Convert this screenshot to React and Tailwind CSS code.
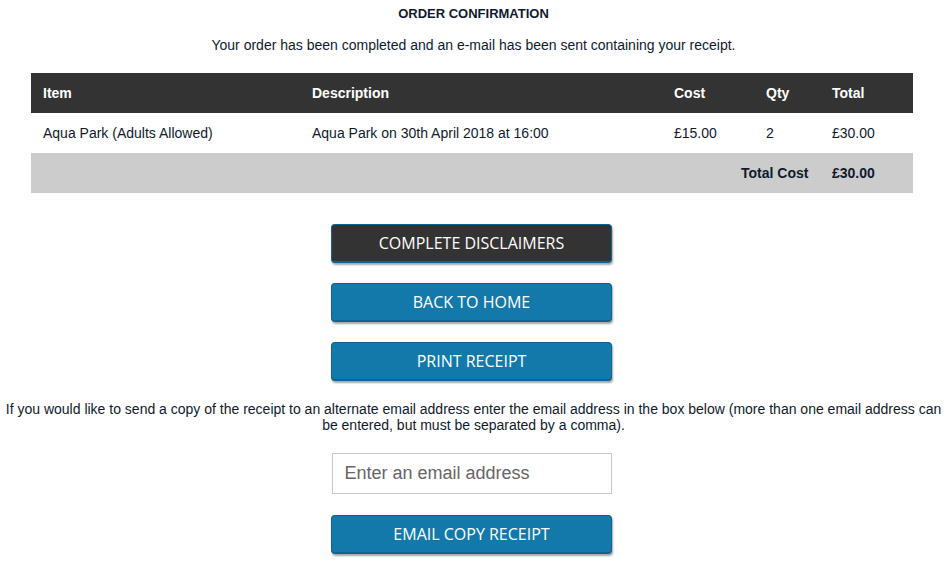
export default function App() {
  const btn =
    "w-[281px] h-[39px] rounded-[4px] border border-[#0d6391] border-b-2 text-white text-[16px] shadow-[1px_2px_2px_rgba(0,0,0,0.35)] flex items-center justify-center";
  return (
    <div className="w-[947px] h-[563px] bg-white overflow-hidden font-['Liberation_Sans',Arial,sans-serif] text-[#0f1a2e]">
      <div className="pt-[6px] text-center text-[13px] font-bold leading-[16px]">ORDER CONFIRMATION</div>
      <div className="mt-[15px] text-center text-[14px] leading-[16px]">
        Your order has been completed and an e-mail has been sent containing your receipt.
      </div>
      <div className="mx-[31px] mt-[20px] w-[882px] text-[14px]">
        <div className="grid grid-cols-[281px_362px_92px_66px_81px] h-[40px] items-center bg-[#333333] text-white font-bold">
          <div className="pl-[12px]">Item</div>
          <div>Description</div>
          <div>Cost</div>
          <div>Qty</div>
          <div>Total</div>
        </div>
        <div className="grid grid-cols-[281px_362px_92px_66px_81px] h-[40px] items-center">
          <div className="pl-[12px]">Aqua Park (Adults Allowed)</div>
          <div>Aqua Park on 30th April 2018 at 16:00</div>
          <div>£15.00</div>
          <div>2</div>
          <div>£30.00</div>
        </div>
        <div className="flex h-[40px] items-center justify-end bg-[#cccccc] font-bold">
          <div className="w-[91px]">Total Cost</div>
          <div className="w-[81px]">£30.00</div>
        </div>
      </div>
      <div className="mt-[31px] pr-[4px] flex flex-col items-center gap-[20px] font-['Open_Sans',sans-serif]">
        <div className={btn + " bg-[#333333]"}>COMPLETE DISCLAIMERS</div>
        <div className={btn + " bg-[#1379aa]"}>BACK TO HOME</div>
        <div className={btn + " bg-[#1379aa]"}>PRINT RECEIPT</div>
      </div>
      <div className="mt-[20px] text-center text-[14px] leading-[16px] px-[2px]">
        If you would like to send a copy of the receipt to an alternate email address enter the email address in the box below (more than one email address can be entered, but must be separated by a comma).
      </div>
      <div className="mt-[20px] pr-[4px] flex justify-center">
        <input
          className="w-[280px] h-[41px] border border-[#c8c8c8] px-[12px] text-[18px] text-[#333] placeholder:text-[#666] outline-none font-['Liberation_Sans',Arial,sans-serif]"
          placeholder="Enter an email address"
        />
      </div>
      <div className="mt-[21px] pr-[4px] flex justify-center font-['Open_Sans',sans-serif]">
        <div className={btn + " bg-[#1379aa]"}>EMAIL COPY RECEIPT</div>
      </div>
    </div>
  );
}
